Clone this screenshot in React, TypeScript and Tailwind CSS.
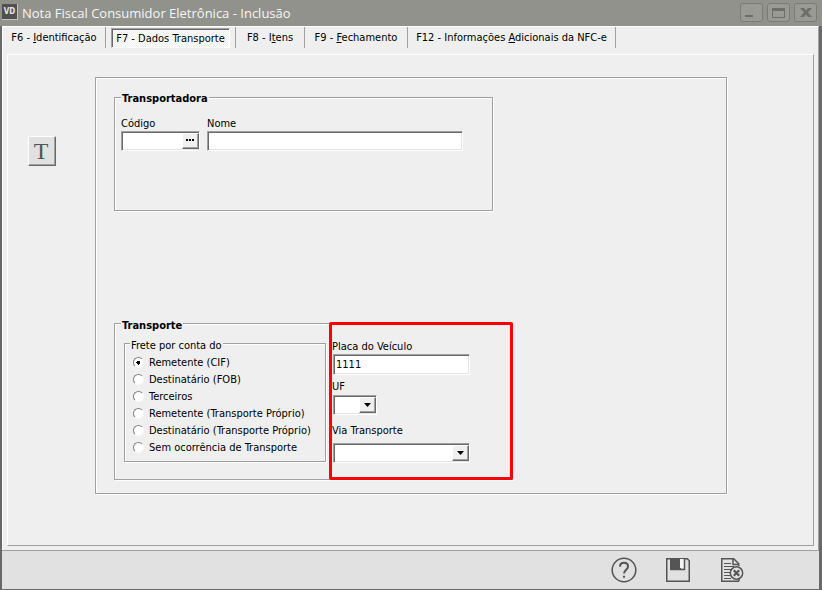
import type { ReactNode } from 'react'
import { clsx } from 'clsx'

const SUNKEN =
  'border border-t-[#a0a0a0] border-l-[#a0a0a0] border-r-white border-b-white bg-white shadow-[inset_1px_1px_0_#696969,inset_-1px_-1px_0_#e3e3e3]'
const RAISED =
  'border border-t-white border-l-white border-r-[#696969] border-b-[#696969] bg-[#efefef] shadow-[inset_-1px_-1px_0_#a0a0a0]'
const ETCHED = 'border border-[#a0a0a0] shadow-[1px_1px_0_#fff,inset_1px_1px_0_#fff]'

const TABS = [
  { width: 'w-[103px]', label: <>F6 - <u>I</u>dentificação</> },
  { width: 'w-[130px]', label: <>F7 - Dados Transporte</>, active: true },
  { width: 'w-[69px]', label: <>F8 - I<u>t</u>ens</> },
  { width: 'w-[103px]', label: <>F9 - <u>F</u>echamento</> },
  { width: 'w-[208px]', label: <>F12 - Informações <u>A</u>dicionais da NFC-e</> },
]

const FREIGHT = [
  'Remetente (CIF)',
  'Destinatário (FOB)',
  'Terceiros',
  'Remetente (Transporte Próprio)',
  'Destinatário (Transporte Próprio)',
  'Sem ocorrência de Transporte',
]

function WindowButton({ label, children }: { label: string; children: ReactNode }) {
  return (
    <button
      type="button"
      aria-label={label}
      className="flex h-[19px] w-[23px] items-center justify-center rounded-[3px] border border-[#7b7c75] bg-[#999a93]"
    >
      <svg width="21" height="17" viewBox="0 0 21 17" fill="none">
        {children}
      </svg>
    </button>
  )
}

function TitleBar() {
  return (
    <header className="flex h-[26px] items-center bg-[#91928b] pr-[5px] pl-[2px]">
      <span className="mb-[2px] flex h-4 w-4 items-center justify-center border-r border-b border-[#c5c5c0] bg-[#505050] text-[8px] font-bold text-[#e6e6e6]">
        VD
      </span>
      <h1 className="ml-1 flex-1 font-['Open_Sans','Noto_Sans',sans-serif] text-[13px] leading-[26px] text-[#f6f6f6]">
        Nota Fiscal Consumidor Eletrônica - Inclusão
      </h1>
      <div className="mb-px flex gap-1">
        <WindowButton label="Minimizar">
          <path d="M4 11h8v2H4z" fill="#6d6e68" />
        </WindowButton>
        <WindowButton label="Maximizar">
          <path d="M4.500 5v8.500h12V5" stroke="#6d6e68" />
          <path d="M4 4h13v3H4z" fill="#6d6e68" />
        </WindowButton>
        <WindowButton label="Fechar">
          <path d="M5 4h4l2 2.500L13 4h4l-4 4.500 4 4.500h-4l-2-2.500L9 13H5l4-4.500z" fill="#6d6e68" />
        </WindowButton>
      </div>
    </header>
  )
}

function Tabs() {
  return (
    <nav role="tablist" className="flex h-[21px]">
      {TABS.map((tab, i) => (
        <button
          key={i}
          type="button"
          role="tab"
          aria-selected={!!tab.active}
          className={clsx('flex h-[21px] justify-center border-r border-[#a0a0a0] whitespace-nowrap', tab.width)}
        >
          {tab.active ? (
            <span className="mt-px h-5 w-[119px] border border-t-[#a0a0a0] border-l-[#a0a0a0] border-r-white border-b-white bg-[conic-gradient(#fff_25%,#efefef_0_50%,#fff_0_75%,#efefef_0)] bg-[length:2px_2px] leading-[20px] shadow-[inset_1px_1px_0_#696969]">
              {tab.label}
            </span>
          ) : (
            <span className="leading-[22px]">{tab.label}</span>
          )}
        </button>
      ))}
    </nav>
  )
}

function DropDown({ id, className }: { id: string; className: string }) {
  return (
    <div className={clsx('relative h-5', className)}>
      <select id={id} className={clsx('h-full w-full appearance-none outline-none', SUNKEN)}>
        <option></option>
      </select>
      <span className={clsx('pointer-events-none absolute top-[2px] right-px flex h-4 w-[17px] items-center justify-center', RAISED)}>
        <svg width="7" height="4" viewBox="0 0 7 4">
          <path d="M0 0h7L3.500 4z" fill="#000" />
        </svg>
      </span>
    </div>
  )
}

function Carrier() {
  return (
    <fieldset className={clsx('h-[120px] max-w-[379px] px-[6px]', ETCHED)}>
      <legend className="h-3 bg-[#efefef] px-px leading-4 font-bold">Transportadora</legend>
      <div className="mt-[13px] flex gap-[7px]">
        <div>
          <label htmlFor="codigo" className="block h-[15px] leading-[15px]">Código</label>
          <div className="relative h-5 w-[79px]">
            <input id="codigo" className={clsx('block h-full w-full pr-5 pl-1 outline-none', SUNKEN)} />
            <button
              type="button"
              aria-label="Procurar"
              className={clsx('absolute top-[2px] right-px flex h-4 w-[17px] items-center justify-center pr-px pb-[2px]', RAISED)}
            >
              <svg width="8" height="2" viewBox="0 0 8 2">
                <path d="M0 0h2v2H0zM3 0h2v2H3zM6 0h2v2H6z" fill="#000" />
              </svg>
            </button>
          </div>
        </div>
        <div className="max-w-[256px] flex-1">
          <label htmlFor="nome" className="block h-[15px] leading-[15px]">Nome</label>
          <input id="nome" className={clsx('block h-5 w-full pl-1 outline-none', SUNKEN)} />
        </div>
      </div>
    </fieldset>
  )
}

function Transport() {
  return (
    <div className="relative max-w-[399px]">
      <fieldset className={clsx('h-[163px] px-[6px]', ETCHED)}>
        <legend className="h-3 bg-[#efefef] px-px leading-[18px] font-bold">Transporte</legend>
        <div className="flex gap-[6px] pl-[3px]">
          <fieldset className={clsx('mt-2 h-[125px] w-[202px] shrink-0 px-[5px]', ETCHED)}>
            <legend className="h-3 bg-[#efefef] px-px leading-[18px]">Frete por conta do</legend>
            <div className="mt-[5px] pl-[3px]">
              {FREIGHT.map((name, i) => (
                <label key={name} className="flex h-[17px] items-center gap-[5px] whitespace-nowrap">
                  <input
                    type="radio"
                    name="frete"
                    defaultChecked={i === 0}
                    className="h-[11px] w-[11px] appearance-none rounded-full border border-t-[#808080] border-l-[#808080] border-r-[#f8f8f8] border-b-[#f8f8f8] bg-white checked:bg-[radial-gradient(circle,#000_2px,#fff_2px)]"
                  />
                  {name}
                </label>
              ))}
            </div>
          </fieldset>
          <div className="mt-[10px]">
            <label htmlFor="placa" className="block h-[15px] leading-[15px]">Placa do Veículo</label>
            <input id="placa" defaultValue="1111" className={clsx('ml-px block h-[21px] w-[137px] pl-[2px] outline-none', SUNKEN)} />
            <label htmlFor="uf" className="mt-1 block h-4 leading-[15px]">UF</label>
            <DropDown id="uf" className="ml-px w-11" />
            <label htmlFor="via" className="mt-2 block h-5 leading-[15px]">Via Transporte</label>
            <DropDown id="via" className="ml-px w-[137px]" />
          </div>
        </div>
      </fieldset>
      {/* highlight over the vehicle fields */}
      <div className="pointer-events-none absolute top-[5px] right-0 bottom-0 left-[215px] rounded-[2px] border-3 border-[#ff0000]" />
    </div>
  )
}

function Footer() {
  return (
    <footer className="flex h-[39px] items-center justify-end gap-7 border-t border-[#a0a0a0] bg-[#e1e1e1] pr-[75px]">
      <button type="button" aria-label="Ajuda">
        <svg width="26" height="26" viewBox="0 0 26 26" fill="none" stroke="#555" strokeWidth="1.500">
          <circle cx="13" cy="13" r="11.800" />
          <path d="M9 9.800C9 7 10.600 5.800 13 5.800s4 1.400 4 3.600c0 3.200-4 3.400-4 7.200" strokeWidth="2" />
          <path d="M12 18.700h2v2h-2z" fill="#555" stroke="none" />
        </svg>
      </button>
      <button type="button" aria-label="Salvar">
        <svg width="26" height="26" viewBox="0 0 26 26" fill="none" stroke="#555" strokeWidth="1.500">
          <path d="M1.750 1.750h20.500l2 2v20.500H1.750z" />
          <path d="M5 2h11v11H5z" fill="#555" stroke="none" />
          <path d="M15 2h4v9h-4z" fill="#f4f4f4" stroke="none" />
          <path d="M5 12.500h14.500V2" />
        </svg>
      </button>
      <button type="button" aria-label="Cancelar">
        <svg width="25" height="26" viewBox="-1 0 25 26" fill="none" stroke="#555" strokeWidth="1.500">
          <path d="M19 24.250H1.750V1.750h12l5 5V9M13 2v5.500h5.500M19 21v3.250" />
          <path d="M4 6.500h7M4 9.500h10M4 12.500h7M4 15.500h6M4 18.500h6M4 21.500h7" strokeWidth="1" />
          <circle cx="16.500" cy="16" r="6.200" fill="#e1e1e1" />
          <path d="M13.800 13.300l5.400 5.400M19.200 13.300l-5.400 5.400" strokeWidth="2.200" />
        </svg>
      </button>
    </footer>
  )
}

export default function App() {
  return (
    <div className="flex min-h-screen flex-col border-b border-[#696969] bg-[#91928b] font-['DejaVu_Sans_Condensed','DejaVu_Sans',sans-serif] text-[11px] leading-[14px] text-black">
      <TitleBar />
      <div className="flex flex-1 flex-col border-r-3 border-l-2 border-[#696969]">
        <main className="flex flex-1 flex-col border-t border-r border-l border-t-white border-l-white border-r-[#a0a0a0] bg-[#efefef] pb-1">
          <Tabs />
          <section className="mt-[6px] mr-1 ml-1 flex flex-1 items-start border border-t-white border-l-white border-r-[#a0a0a0] border-b-[#a0a0a0] pr-[86px] pl-5">
            <button
              type="button"
              className={clsx(
                "mt-[81px] flex h-[30px] w-7 shrink-0 items-center justify-center bg-[#e1e1e1] pr-[2px] font-['Liberation_Serif',serif] text-[24px] text-[#555]",
                'border border-t-white border-l-white border-r-[#696969] border-b-[#696969] shadow-[inset_-1px_-1px_0_#a0a0a0]',
              )}
            >
              T
            </button>
            <div className={clsx('mt-[22px] ml-[39px] flex-1 px-[18px] pt-[13px] pb-[13px]', ETCHED)}>
              <Carrier />
              <div className="mt-[106px]">
                <Transport />
              </div>
            </div>
          </section>
        </main>
        <Footer />
      </div>
    </div>
  )
}
